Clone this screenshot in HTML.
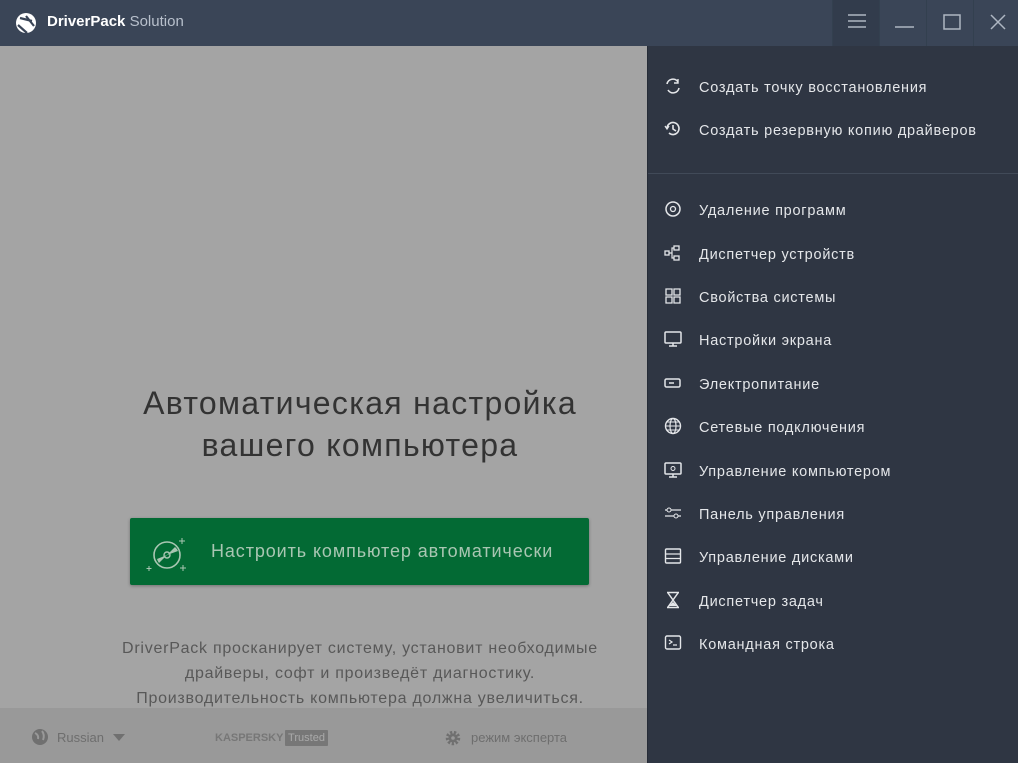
<!DOCTYPE html>
<html><head><meta charset="utf-8"><style>
*{margin:0;padding:0;box-sizing:border-box}
body{width:1018px;height:763px;overflow:hidden;position:relative;font-family:"Liberation Sans","DejaVu Sans",sans-serif;background:#a4a4a4}
.top{position:absolute;left:0;top:0;width:1018px;height:46px;background:#3a4557}
.logo{position:absolute;left:14px;top:11px}
.brand{position:absolute;left:47px;top:13px;font-size:15px;color:#fff}
.brand b{font-weight:bold}.brand span{color:#b8c0cc}
.wb{position:absolute;top:0;height:46px;width:47px;border-left:1px solid #33404f}
.left{position:absolute;left:0;top:46px;width:647px;height:717px;background:#a4a4a4}
h1{position:absolute;left:0;width:720px;top:382px;text-align:center;font-weight:normal;font-size:32px;line-height:42px;color:#333;letter-spacing:1.3px}
.btn{position:absolute;left:130px;top:518px;width:459px;height:67px;background:#036a34;border-radius:2px;box-shadow:0 1px 3px rgba(0,0,0,.3)}
.btn span{position:absolute;left:81px;top:23px;font-size:18px;color:#a9c6b2;letter-spacing:0.9px}
.desc{position:absolute;left:0;width:720px;top:636px;text-align:center;font-size:16px;line-height:25px;color:#585858;letter-spacing:0.75px}
.foot{position:absolute;left:0;top:708px;width:647px;height:55px;background:#999}
.foot .t{position:absolute;top:22px;font-size:13px;color:#6e6e6e}
.panel{position:absolute;left:647px;top:46px;width:371px;height:717px;background:#2f3643;border-left:1px solid #262c37}
.it{position:absolute;left:51px;font-size:14.5px;color:#e4e6e9;letter-spacing:0.75px;margin-top:2px}
.ic{position:absolute;left:16px;width:18px;height:18px;margin-top:-1px}
.div{position:absolute;left:0;top:127px;width:371px;height:1px;background:#414a58}
</style></head><body>
<div class="top">
<svg class="logo" width="24" height="24" viewBox="0 0 24 24"><circle cx="12" cy="12" r="10" fill="#fff"/><path d="M6 7 L18 10 M4 14 L13 22 M12 5 L20 15" stroke="#3a4557" stroke-width="2.2" fill="none"/></svg>
<div class="brand"><b>DriverPack</b> <span>Solution</span></div>
<div class="wb" style="left:832px;background:#323c4c"><svg width="47" height="46"><path d="M15 15h18M15 21h18M15 27h18" stroke="#aeb6c2" stroke-width="1.5"/></svg></div>
<div class="wb" style="left:879px"><svg width="47" height="46"><path d="M15 27h19" stroke="#aeb6c2" stroke-width="1.5"/></svg></div>
<div class="wb" style="left:926px"><svg width="47" height="46"><rect x="17" y="15" width="16" height="14" stroke="#aeb6c2" stroke-width="1.5" fill="none"/></svg></div>
<div class="wb" style="left:973px;width:45px"><svg width="45" height="46"><path d="M17 15l14 14M31 15L17 29" stroke="#aeb6c2" stroke-width="1.5"/></svg></div>
</div>
<div class="left">
</div>
<h1>Автоматическая настройка<br>вашего компьютера</h1>
<div class="btn"><svg style="position:absolute;left:15px;top:14px" width="50" height="44" viewBox="0 0 50 44"><circle cx="22" cy="23" r="13" fill="none" stroke="#a9c6b2" stroke-width="1.6"/><path d="M22 23 L14 31 A11 11 0 0 1 12 27Z M22 23 L30 15 A11 11 0 0 1 33 19Z" fill="#a9c6b2"/><circle cx="22" cy="23" r="3" fill="none" stroke="#a9c6b2" stroke-width="1.4"/><path d="M37 6v6M34 9h6M4 34v5M1.5 36.5h5M38 33v6M35 36h6" stroke="#a9c6b2" stroke-width="1"/></svg><span>Настроить компьютер автоматически</span></div>
<div class="desc">DriverPack просканирует систему, установит необходимые<br>драйверы, софт и произведёт диагностику.<br>Производительность компьютера должна увеличиться.</div>
<div class="foot">
<svg style="position:absolute;left:31px;top:20px" width="18" height="18"><circle cx="9" cy="9" r="8" fill="#707070"/><path d="M4 5q4 2 3 6M11 3q3 4 1 9" stroke="#999" stroke-width="2" fill="none"/></svg>
<div class="t" style="left:57px">Russian</div>
<svg style="position:absolute;left:113px;top:26px" width="12" height="8"><path d="M0 0h12L6 7z" fill="#707070"/></svg>
<div class="t" style="left:215px;font-weight:bold;font-size:11px;top:24px;color:#777">KASPERSKY</div>
<div style="position:absolute;left:285px;top:22px;width:43px;height:16px;background:#777;color:#aaa;font-size:11px;text-align:center;line-height:16px;border-radius:1px">Trusted</div>
<svg style="position:absolute;left:445px;top:22px" width="16" height="16" viewBox="0 0 16 16"><circle cx="8" cy="8" r="5.5" fill="none" stroke="#707070" stroke-width="3.5" stroke-dasharray="2.2 1.6"/><circle cx="8" cy="8" r="4.5" fill="#707070"/><circle cx="8" cy="8" r="1.8" fill="#999"/></svg>
<div class="t" style="left:471px">режим эксперта</div>
</div>
<div class="panel">
<svg class="ic" style="top:32px" viewBox="0 0 18 18"><path d="M3 7A6 6 0 0 1 14 5M15 11A6 6 0 0 1 4 13" stroke="#e4e6e9" stroke-width="1.6" fill="none"/><path d="M14 2v4h-4" stroke="#e4e6e9" stroke-width="1.4" fill="none"/></svg><div class="it" style="top:32px">Создать точку восстановления</div>
<svg class="ic" style="top:75px" viewBox="0 0 18 18"><path d="M3 8A6 6 0 1 1 5 13M9 5v4l3 2" stroke="#e4e6e9" stroke-width="1.6" fill="none"/><path d="M1 6l2 3 2-3" stroke="#e4e6e9" stroke-width="1.3" fill="none"/></svg><div class="it" style="top:75px">Создать резервную копию драйверов</div>
<div class="div"></div>
<svg class="ic" style="top:155px" viewBox="0 0 18 18"><circle cx="9" cy="9" r="7" stroke="#e4e6e9" stroke-width="1.5" fill="none"/><circle cx="9" cy="9" r="2.5" stroke="#e4e6e9" stroke-width="1.3" fill="none"/></svg><div class="it" style="top:155px">Удаление программ</div>
<svg class="ic" style="top:199px" viewBox="0 0 18 18"><rect x="1" y="7" width="4" height="4" stroke="#e4e6e9" fill="none" stroke-width="1.3"/><rect x="10" y="2" width="5" height="4" stroke="#e4e6e9" fill="none" stroke-width="1.3"/><rect x="10" y="12" width="5" height="4" stroke="#e4e6e9" fill="none" stroke-width="1.3"/><path d="M5 9h3V4h2M8 9v5h2" stroke="#e4e6e9" fill="none" stroke-width="1.2"/></svg><div class="it" style="top:199px">Диспетчер устройств</div>
<svg class="ic" style="top:242px" viewBox="0 0 18 18"><path d="M2 2h6v6H2zM10 2h6v6h-6zM2 10h6v6H2zM10 10h6v6h-6z" stroke="#e4e6e9" fill="none" stroke-width="1.3"/></svg><div class="it" style="top:242px">Свойства системы</div>
<svg class="ic" style="top:285px" viewBox="0 0 18 18"><rect x="1" y="2" width="16" height="11" rx="1" stroke="#e4e6e9" fill="none" stroke-width="1.5"/><path d="M9 13v3M5 16h8" stroke="#e4e6e9" stroke-width="1.5"/></svg><div class="it" style="top:285px">Настройки экрана</div>
<svg class="ic" style="top:329px" viewBox="0 0 18 18"><rect x="1" y="5" width="15" height="8" rx="1.5" stroke="#e4e6e9" fill="none" stroke-width="1.5"/><path d="M5 9h5" stroke="#e4e6e9" stroke-width="1.5"/></svg><div class="it" style="top:329px">Электропитание</div>
<svg class="ic" style="top:372px" viewBox="0 0 18 18"><circle cx="9" cy="9" r="7.5" stroke="#e4e6e9" fill="none" stroke-width="1.4"/><ellipse cx="9" cy="9" rx="3" ry="7.5" stroke="#e4e6e9" fill="none" stroke-width="1.2"/><path d="M1.5 9h15M3 5h12M3 13h12" stroke="#e4e6e9" stroke-width="1.1"/></svg><div class="it" style="top:372px">Сетевые подключения</div>
<svg class="ic" style="top:416px" viewBox="0 0 18 18"><rect x="1" y="2" width="16" height="11" rx="1" stroke="#e4e6e9" fill="none" stroke-width="1.5"/><circle cx="9" cy="7.5" r="2" stroke="#e4e6e9" fill="none"/><path d="M9 13v3M5 16h8" stroke="#e4e6e9" stroke-width="1.5"/></svg><div class="it" style="top:416px">Управление компьютером</div>
<svg class="ic" style="top:459px" viewBox="0 0 18 18"><path d="M1 6h16M1 12h16" stroke="#e4e6e9" stroke-width="1.2"/><circle cx="5" cy="6" r="2" fill="#2f3643" stroke="#e4e6e9"/><circle cx="12" cy="12" r="2" fill="#2f3643" stroke="#e4e6e9"/></svg><div class="it" style="top:459px">Панель управления</div>
<svg class="ic" style="top:502px" viewBox="0 0 18 18"><rect x="1.5" y="2" width="15" height="14" rx="1" stroke="#e4e6e9" fill="none" stroke-width="1.4"/><path d="M1.5 7h15M1.5 11.5h15" stroke="#e4e6e9" stroke-width="1.2"/></svg><div class="it" style="top:502px">Управление дисками</div>
<svg class="ic" style="top:546px" viewBox="0 0 18 18"><path d="M3 1.5h12M3 16.5h12M4 2l5 7-5 7M14 2l-5 7 5 7" stroke="#e4e6e9" fill="none" stroke-width="1.5"/><path d="M5 15l4-4 4 4z" fill="#e4e6e9"/></svg><div class="it" style="top:546px">Диспетчер задач</div>
<svg class="ic" style="top:589px" viewBox="0 0 18 18"><rect x="1.5" y="2" width="15" height="13" rx="1.5" stroke="#e4e6e9" fill="none" stroke-width="1.4"/><path d="M5 6l3 2-3 2M9 11h4" stroke="#e4e6e9" fill="none" stroke-width="1.2"/></svg><div class="it" style="top:589px">Командная строка</div>
</div>
</body></html>
